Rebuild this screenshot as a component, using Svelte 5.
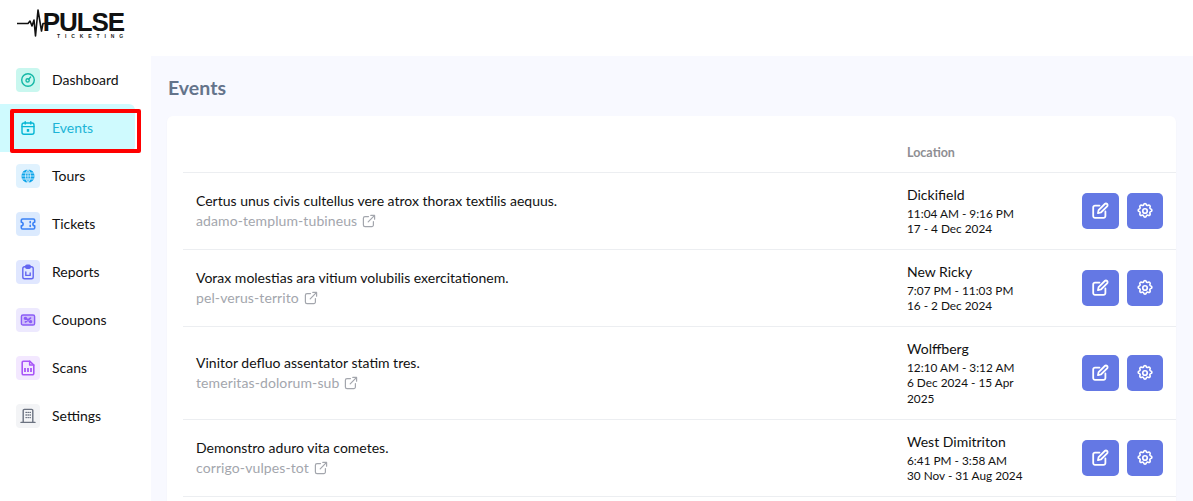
<script>
    const navItems = [
        { label: 'Dashboard', icon: 'gauge', tint: '#c9f7ef', color: '#14b8a6' },
        { label: 'Events', icon: 'calendar', tint: 'transparent', color: '#06b6d4', active: true },
        { label: 'Tours', icon: 'globe', tint: '#e0f2fe', color: '#0ea5e9' },
        { label: 'Tickets', icon: 'ticket', tint: '#dbeafe', color: '#3b82f6' },
        { label: 'Reports', icon: 'report', tint: '#e0e7ff', color: '#6366f1' },
        { label: 'Coupons', icon: 'coupon', tint: '#ede9fe', color: '#8b5cf6' },
        { label: 'Scans', icon: 'scan', tint: '#f3e8ff', color: '#a855f7' },
        { label: 'Settings', icon: 'building', tint: '#f3f4f6', color: '#6b7280' }
    ];

    const events = [
        { title: 'Certus unus civis cultellus vere atrox thorax textilis aequus.', slug: 'adamo-templum-tubineus', place: 'Dickifield', time: '11:04 AM - 9:16 PM', date: '17 - 4 Dec 2024' },
        { title: 'Vorax molestias ara vitium volubilis exercitationem.', slug: 'pel-verus-territo', place: 'New Ricky', time: '7:07 PM - 11:03 PM', date: '16 - 2 Dec 2024' },
        { title: 'Vinitor defluo assentator statim tres.', slug: 'temeritas-dolorum-sub', place: 'Wolffberg', time: '12:10 AM - 3:12 AM', date: '6 Dec 2024 - 15 Apr 2025' },
        { title: 'Demonstro aduro vita cometes.', slug: 'corrigo-vulpes-tot', place: 'West Dimitriton', time: '6:41 PM - 3:58 AM', date: '30 Nov - 31 Aug 2024' }
    ];
</script>

<div class="page">
    <header class="topbar">
        <div class="logo">
            <svg class="pulse" width="36" height="28" viewBox="0 0 36 28" fill="none" stroke="#111" stroke-width="1.6" stroke-linejoin="round">
                <path d="M0 14.5H11L13 12L15 17L17 11L18.5 27L21 1L24.5 22L26 14.5H36" />
            </svg>
            <div class="wordmark">
                <span class="word">PULSE</span>
                <span class="sub">TICKETING</span>
            </div>
        </div>
    </header>

    <div class="body">
        <nav class="sidebar">
            {#each navItems as item}
                <div class="nav-item" class:active={item.active}>
                    <span class="nav-icon" style="background: {item.tint}; color: {item.color}">
                        <svg width="16" height="16" viewBox="0 0 16 16" fill="none" stroke="currentColor" stroke-width="1.4" stroke-linecap="round" stroke-linejoin="round">
                            {#if item.icon === 'gauge'}
                                <circle cx="8" cy="8" r="6.3" />
                                <circle cx="7.6" cy="8.4" r="1.6" />
                                <path d="M8.8 7.2L10.6 5" />
                            {:else if item.icon === 'calendar'}
                                <rect x="2" y="3" width="12" height="11.2" rx="2" />
                                <path d="M2 6.6H14M5.2 1.6V4M10.8 1.6V4" />
                                <rect x="6.8" y="9" width="2.4" height="2.8" fill="currentColor" stroke="none" />
                            {:else if item.icon === 'globe'}
                                <circle cx="8" cy="8" r="6.6" fill="currentColor" stroke="none" />
                                <path d="M1.6 8H14.4M2.4 5H13.6M2.4 11H13.6M8 1.4V14.6M8 1.4C4.6 5 4.6 11 8 14.6M8 1.4C11.4 5 11.4 11 8 14.6" stroke="#e0f2fe" stroke-width="0.8" />
                            {:else if item.icon === 'ticket'}
                                <path d="M2.6 3H13.4A1.3 1.3 0 0 1 14.7 4.3V6.2A1.8 1.8 0 0 0 14.7 9.8V11.7A1.3 1.3 0 0 1 13.4 13H2.6A1.3 1.3 0 0 1 1.3 11.7V9.8A1.8 1.8 0 0 0 1.3 6.2V4.3A1.3 1.3 0 0 1 2.6 3Z" stroke-width="1.6" />
                                <path d="M10.2 5.6V6.8M10.2 9.2V10.4" stroke-width="1.6" />
                            {:else if item.icon === 'report'}
                                <rect x="2.8" y="2.8" width="10.4" height="12" rx="1.8" />
                                <rect x="5.8" y="1.2" width="4.4" height="3" rx="1" fill="currentColor" />
                                <path d="M5.8 8V11.4H10.2V9" />
                            {:else if item.icon === 'coupon'}
                                <rect x="1.4" y="3" width="13.2" height="10" rx="1.6" fill="currentColor" fill-opacity="0.3" />
                                <path d="M5.4 6L10.6 10M10.6 6L5.4 10" stroke-width="1.6" />
                                <circle cx="5.4" cy="6.4" r="1" fill="currentColor" />
                                <circle cx="10.6" cy="9.6" r="1" fill="currentColor" />
                            {:else if item.icon === 'scan'}
                                <path d="M3.4 1.2H9.6L13.8 5V13.4A1.4 1.4 0 0 1 12.4 14.8H3.6A1.4 1.4 0 0 1 2.2 13.4V2.4A1.2 1.2 0 0 1 3.4 1.2Z" stroke-width="1.6" />
                                <path d="M9.6 1.2V5H13.8" />
                                <path d="M5 8V12M8 8V12M11 8V12" stroke-width="1.8" stroke-linecap="butt" />
                            {:else}
                                <path d="M3.2 14V2.6A1.2 1.2 0 0 1 4.4 1.4H11.6A1.2 1.2 0 0 1 12.8 2.6V14" />
                                <path d="M1 14.4H15" />
                                <path d="M6 4.4H6.4M8 4.4H8.4M10 4.4H10.4M6 7H6.4M8 7H8.4M10 7H10.4M6 9.6H6.4M8 9.6H8.4M10 9.6H10.4" />
                            {/if}
                        </svg>
                    </span>
                    <span class="nav-label">{item.label}</span>
                </div>
            {/each}
            <div class="highlight"></div>
        </nav>

        <main class="content">
            <h1>Events</h1>
            <section class="card">
                <div class="table-head">
                    <span class="loc-col">Location</span>
                </div>
                {#each events as event}
                    <div class="row">
                        <div class="main-col">
                            <div class="title">{event.title}</div>
                            <div class="slug">
                                {event.slug}
                                <svg width="14" height="14" viewBox="0 0 14 14" fill="none" stroke="currentColor" stroke-width="1.2" stroke-linecap="round" stroke-linejoin="round">
                                    <path d="M6.5 2.6H3A1.6 1.6 0 0 0 1.4 4.2V11A1.6 1.6 0 0 0 3 12.6H9.8A1.6 1.6 0 0 0 11.4 11V7.5" />
                                    <path d="M6.2 7.8L12.6 1.4M8.8 1.4H12.6V5.2" />
                                </svg>
                            </div>
                        </div>
                        <div class="loc-col">
                            <div class="place">{event.place}</div>
                            <div class="when">{event.time}</div>
                            <div class="when">{event.date}</div>
                        </div>
                        <div class="actions">
                            <button aria-label="Edit">
                                <svg width="18" height="18" viewBox="0 0 18 18" fill="none" stroke="#fff" stroke-width="1.8" stroke-linecap="round" stroke-linejoin="round">
                                    <path d="M8.5 3.6H4A1.8 1.8 0 0 0 2.2 5.4V14A1.8 1.8 0 0 0 4 15.8H12.6A1.8 1.8 0 0 0 14.4 14V9.5" />
                                    <path d="M7 11.2L7.6 8.2L13.8 2A1.6 1.6 0 0 1 16.1 4.3L9.9 10.5Z" />
                                </svg>
                            </button>
                            <button aria-label="Settings">
                                <svg width="18" height="18" viewBox="0 0 24 24" fill="none" stroke="#fff" stroke-width="2.2" stroke-linecap="round" stroke-linejoin="round">
                                    <path d="M10.3 3.3c.4-1.8 3-1.8 3.4 0a1.7 1.7 0 0 0 2.6 1.1c1.5-.9 3.3.8 2.4 2.4a1.7 1.7 0 0 0 1.1 2.5c1.8.4 1.8 3 0 3.4a1.7 1.7 0 0 0-1.1 2.6c.9 1.5-.8 3.3-2.4 2.4a1.7 1.7 0 0 0-2.6 1.1c-.4 1.8-3 1.8-3.4 0a1.7 1.7 0 0 0-2.6-1.1c-1.5.9-3.3-.8-2.4-2.4a1.7 1.7 0 0 0-1-2.6c-1.8-.4-1.8-3 0-3.4a1.7 1.7 0 0 0 1-2.5c-.9-1.6.9-3.3 2.4-2.4a1.7 1.7 0 0 0 2.6-1.1Z" />
                                    <circle cx="12" cy="12" r="3" />
                                </svg>
                            </button>
                        </div>
                    </div>
                {/each}
            </section>
        </main>
    </div>
</div>

<style>
    :global(body) {
        margin: 0;
        background: #fff;
        overflow: hidden;
    }

    .page {
        width: 1193px;
        height: 501px;
        overflow: hidden;
        font-family: Lato, "Open Sans", sans-serif;
        color: #111;
    }

    .topbar {
        height: 56px;
        padding-left: 17px;
        display: flex;
        align-items: flex-start;
    }

    .logo {
        display: flex;
        align-items: flex-start;
        padding-top: 9px;
    }

    .pulse {
        margin-right: -10px;
    }

    .wordmark {
        display: flex;
        flex-direction: column;
        align-items: flex-end;
        width: 81px;
        padding-top: 3px;
    }

    .word {
        font-family: "Liberation Sans", sans-serif;
        font-size: 26px;
        font-weight: 700;
        letter-spacing: -1.1px;
        line-height: 21px;
        color: #111;
    }

    .sub {
        font-family: "Liberation Sans", sans-serif;
        font-size: 5px;
        font-weight: 700;
        letter-spacing: 4.9px;
        line-height: 6px;
        color: #222;
        margin-right: -4px;
    }

    .body {
        display: flex;
    }

    .sidebar {
        position: relative;
        width: 151px;
        flex: none;
    }

    .nav-item {
        height: 48px;
        margin-right: 16px;
        padding-left: 16px;
        display: flex;
        align-items: center;
        gap: 12px;
        font-size: 14px;
    }

    .nav-label {
        position: relative;
        top: -1px;
    }

    .nav-item.active {
        background: #cffafe;
        border-radius: 0 6px 6px 0;
        color: #1cb4d6;
    }

    .nav-icon {
        width: 24px;
        height: 24px;
        border-radius: 4px;
        display: flex;
        align-items: center;
        justify-content: center;
    }

    .highlight {
        position: absolute;
        left: 10px;
        top: 53px;
        width: 123px;
        height: 36px;
        border: 4px solid #f00;
        border-radius: 2px;
    }

    .content {
        flex: 1;
        background: #f8f9ff;
        padding: 0 17px 0 16px;
        height: 445px;
    }

    h1 {
        margin: 0;
        padding: 18px 0 0 1px;
        height: 42px;
        font-size: 19.5px;
        line-height: 27px;
        font-weight: 700;
        color: #64748b;
    }

    .card {
        background: #fff;
        border-radius: 6px;
        padding: 0 0 0 16px;
        min-height: 420px;
        box-shadow: 0 1px 2px rgba(15, 23, 42, 0.04);
    }

    .table-head {
        height: 57px;
        padding-top: 16px;
        box-sizing: border-box;
        display: flex;
        justify-content: flex-end;
        align-items: center;
        padding-right: 128px;
        font-size: 12.5px;
        font-weight: 700;
        color: #8e8e93;
        border-bottom: 1px solid #eceef1;
    }

    .table-head .loc-col {
        width: 141px;
    }

    .row {
        display: flex;
        align-items: center;
        padding: 12.5px 13px;
        border-bottom: 1px solid #eceef1;
    }

    .main-col {
        flex: 1;
        min-width: 0;
    }

    .title {
        font-size: 14px;
        line-height: 20px;
    }

    .slug {
        display: flex;
        align-items: center;
        gap: 5px;
        font-size: 14px;
        line-height: 20px;
        letter-spacing: 0.1px;
        color: #a3a6ad;
    }

    .row > .loc-col {
        width: 126px;
        margin-right: 49px;
        color: #111;
    }

    .place {
        font-size: 14px;
        line-height: 18px;
        margin-bottom: 2px;
    }

    .when {
        font-size: 11.8px;
        line-height: 15.6px;
    }

    .actions {
        display: flex;
        gap: 8px;
        flex: none;
    }

    button {
        width: 36.5px;
        height: 36px;
        padding: 0;
        border: 0;
        border-radius: 5px;
        background: #6478e4;
        display: flex;
        align-items: center;
        justify-content: center;
    }
</style>
